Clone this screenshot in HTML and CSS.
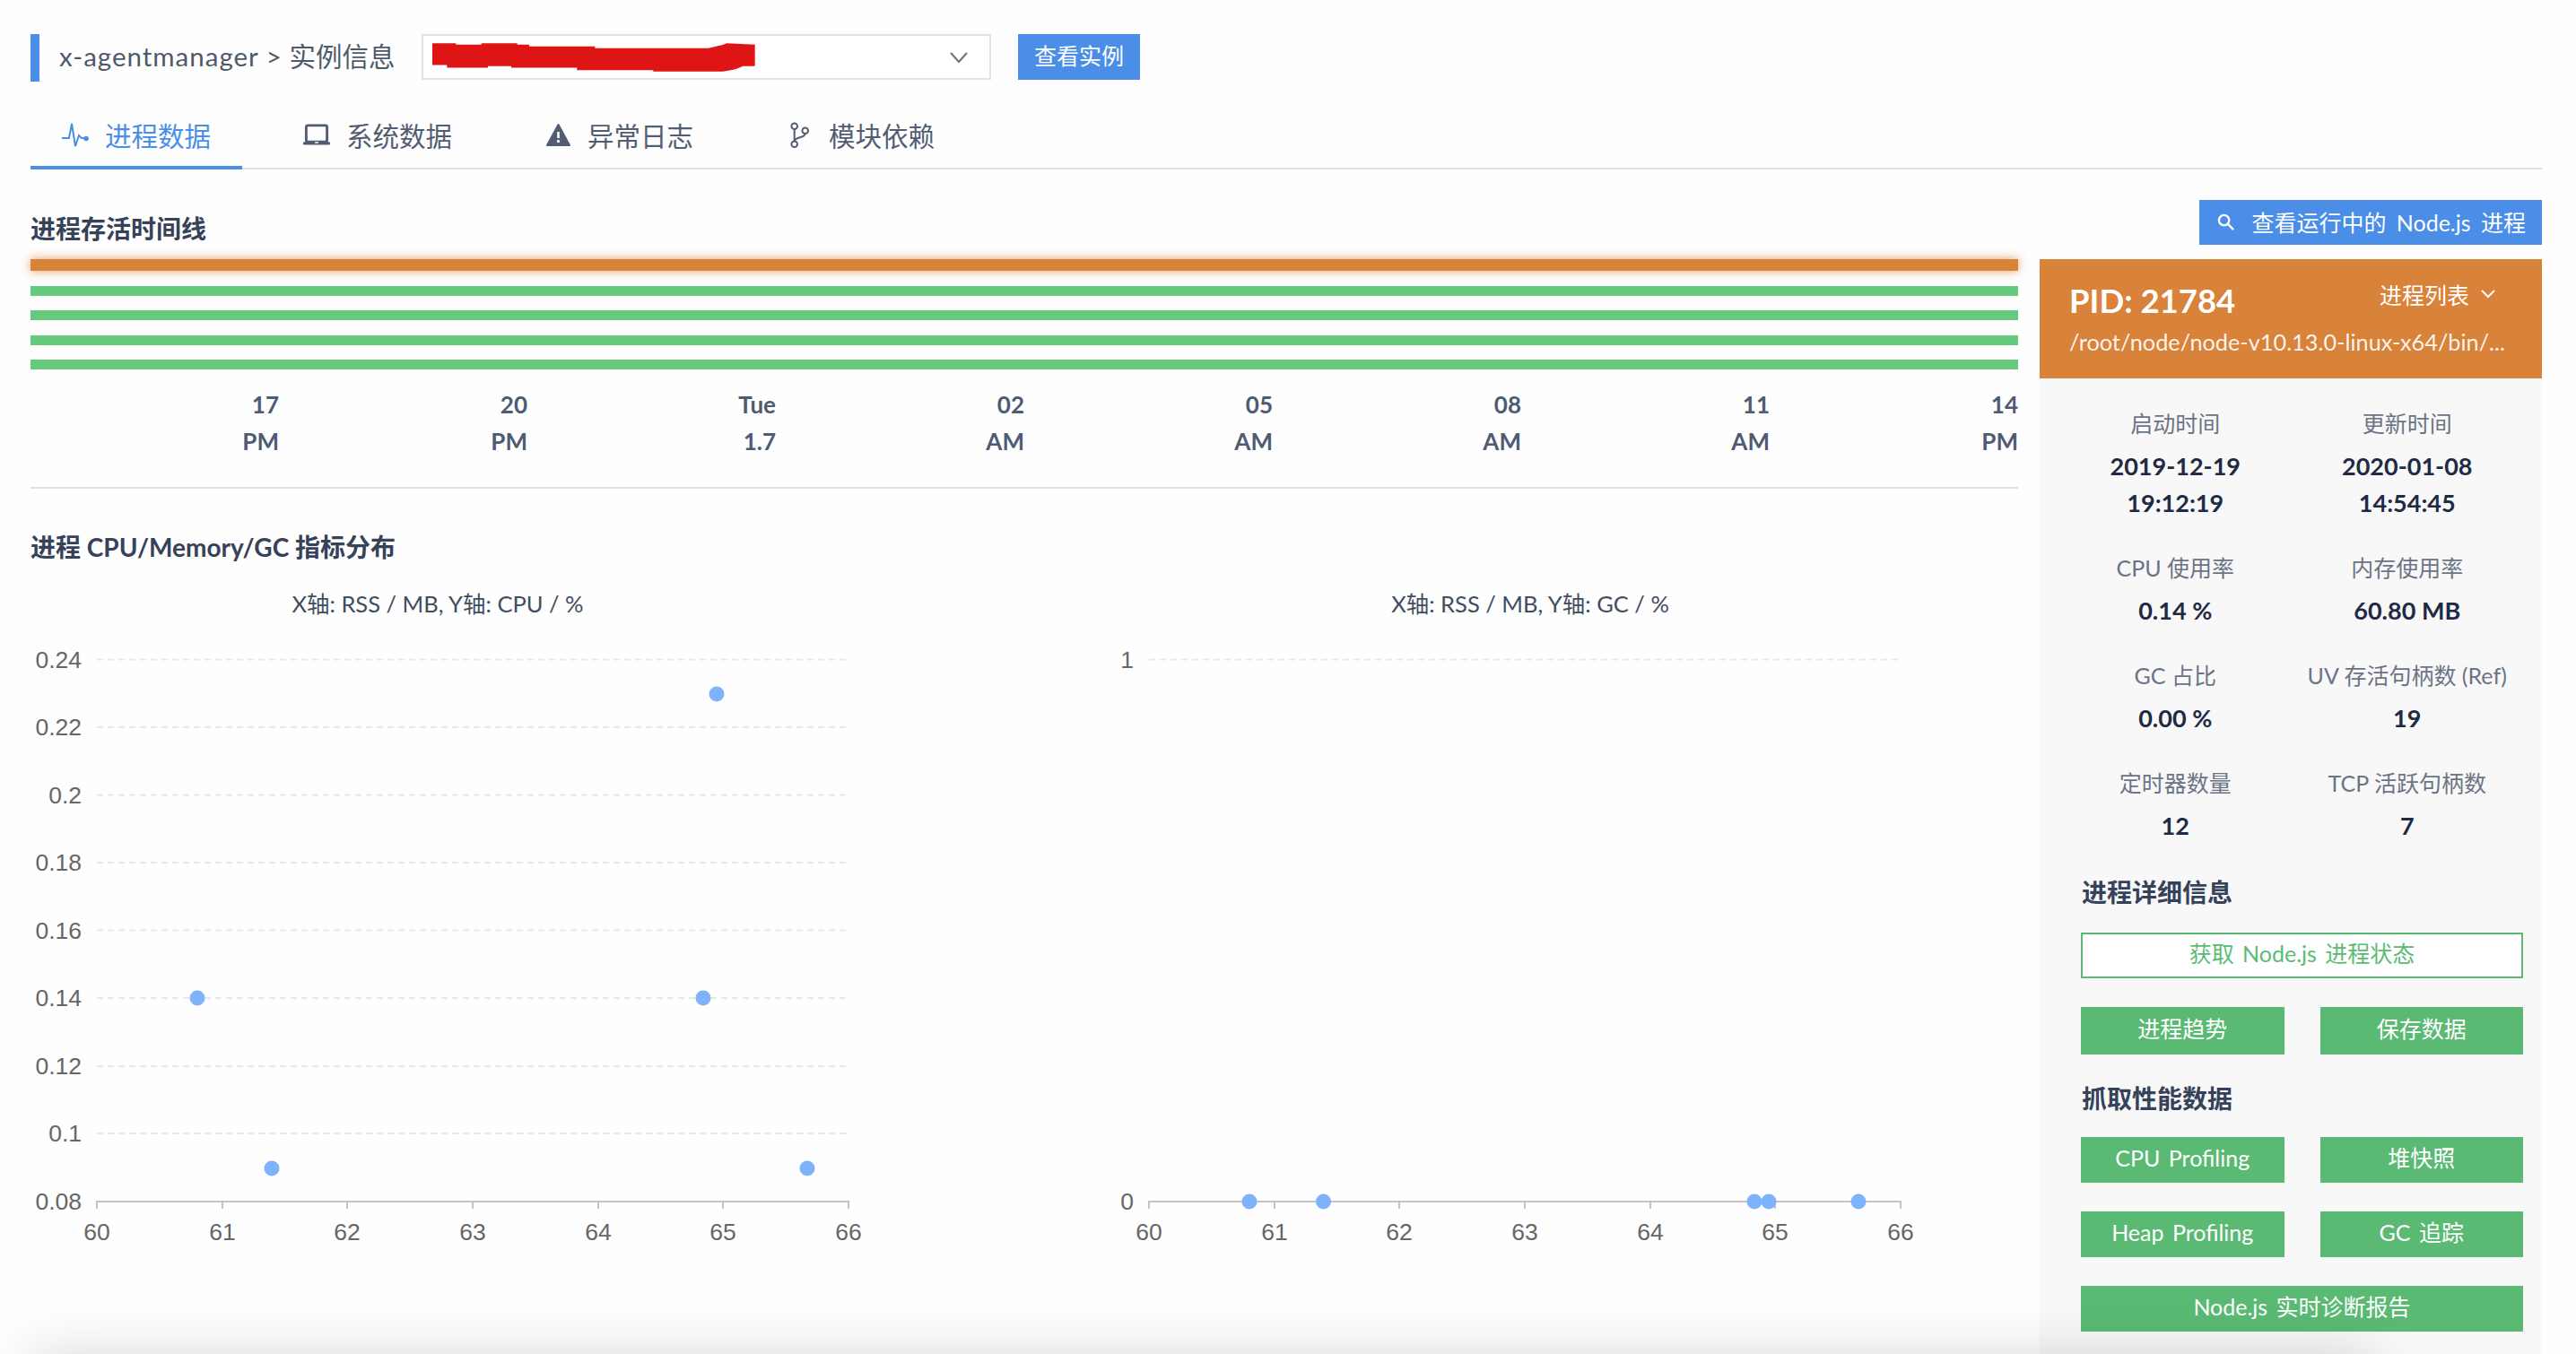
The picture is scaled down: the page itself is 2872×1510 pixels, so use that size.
FILE: index.html
```html
<!DOCTYPE html>
<html lang="zh">
<head>
    <meta charset="UTF-8">
    <title>实例信息</title>
    <link rel="stylesheet" href="styles.css">
</head>
<body>
<div class="page">
    <div class="top-bar">
        <div class="crumb"><span class="crumb-app">x-agentmanager &gt;</span> 实例信息</div>
        <div class="select">
            <svg class="redact" viewBox="36 55 1080 95"><polygon points="36,55 115,55 115,60 200,60 200,55 320,55 320,60 360,60 360,66 580,66 580,72 960,72 1010,60 1020,55 1115,60 1115,132 1075,132 1050,142 1008,150 775,150 775,145 520,145 520,137 300,137 300,132 222,132 222,137 85,137 85,128 36,128"/></svg>
            <svg class="select-arrow" viewBox="0 0 20 12"><polyline points="1,1 10,11 19,1"/></svg>
        </div>
        <div class="btn-blue btn-view">查看实例</div>
    </div>

    <ul class="tabs">
        <li class="tab active">
            <svg class="tab-icon" viewBox="0 0 30 30"><polyline class="line" points="0,19 8,19 11,3 15,28 19,16 22,19 25,19"/><circle class="solid" cx="27" cy="19.5" r="2.8"/></svg>
            进程数据
        </li>
        <li class="tab">
            <svg class="tab-icon" viewBox="0 0 31 30"><rect class="line" x="3.5" y="4.5" width="24" height="19" rx="2"/><rect class="solid" x="0" y="23.5" width="31" height="3.5" rx="1.5"/><rect x="13.5" y="23.5" width="4" height="1.5" fill="#fff"/></svg>
            系统数据
        </li>
        <li class="tab">
            <svg class="tab-icon" viewBox="0 0 30 30"><polygon class="solid warn" points="15.5,4 3,27 28,27"/><rect x="14.2" y="12" width="2.6" height="7" fill="#fff"/><rect x="14.2" y="21" width="2.6" height="3" fill="#fff"/></svg>
            异常日志
        </li>
        <li class="tab">
            <svg class="tab-icon" viewBox="0 0 30 30"><circle class="line thin" cx="9.7" cy="5.7" r="3.3"/><circle class="line thin" cx="21.7" cy="10.7" r="3.3"/><circle class="line thin" cx="9.7" cy="25.7" r="3.3"/><path class="line thin" d="M9.7 9V22.4M21.7 14C21.7 19 10.5 17.5 9.7 22.4"/></svg>
            模块依赖
        </li>
    </ul>

    <div class="section-head">
        <h2 class="title">进程存活时间线</h2>
        <div class="btn-blue btn-search">
            <svg class="search-icon" viewBox="0 0 20 20"><circle cx="8" cy="8" r="6"/><line x1="12.5" y1="12.5" x2="19" y2="19"/></svg>
            查看运行中的 Node.js 进程
        </div>
    </div>

    <div class="content">
        <div class="left">
            <div class="timeline">
                <div class="bar bar-current"></div>
                <div class="bar"></div>
                <div class="bar"></div>
                <div class="bar"></div>
                <div class="bar"></div>
            </div>
            <div class="axis">
                <div>17<br>PM</div>
                <div>20<br>PM</div>
                <div>Tue<br>1.7</div>
                <div>02<br>AM</div>
                <div>05<br>AM</div>
                <div>08<br>AM</div>
                <div>11<br>AM</div>
                <div>14<br>PM</div>
            </div>
            <h2 class="title title-chart">进程 CPU/Memory/GC 指标分布</h2>
            <div class="charts">
                <svg class="chart" viewBox="0 0 1108 780">
                    <text class="chart-title" x="454" y="43">X轴: RSS / MB, Y轴: CPU / %</text>
                    <g class="grid">
                        <line x1="74" x2="912" y1="95.6" y2="95.6"/>
                        <line x1="74" x2="912" y1="171" y2="171"/>
                        <line x1="74" x2="912" y1="246.6" y2="246.6"/>
                        <line x1="74" x2="912" y1="322" y2="322"/>
                        <line x1="74" x2="912" y1="397.6" y2="397.6"/>
                        <line x1="74" x2="912" y1="473" y2="473"/>
                        <line x1="74" x2="912" y1="549" y2="549"/>
                        <line x1="74" x2="912" y1="624" y2="624"/>
                    </g>
                    <g class="tick y-tick">
                        <text x="57" y="105">0.24</text>
                        <text x="57" y="180">0.22</text>
                        <text x="57" y="256">0.2</text>
                        <text x="57" y="331">0.18</text>
                        <text x="57" y="407">0.16</text>
                        <text x="57" y="482">0.14</text>
                        <text x="57" y="558">0.12</text>
                        <text x="57" y="633">0.1</text>
                        <text x="57" y="709">0.08</text>
                    </g>
                    <path class="x-axis" d="M74 708V700H912V708M214 700V708M353 700V708M493 700V708M633 700V708M772 700V708"/>
                    <g class="tick x-tick">
                        <text x="74" y="743">60</text>
                        <text x="214" y="743">61</text>
                        <text x="353" y="743">62</text>
                        <text x="493" y="743">63</text>
                        <text x="633" y="743">64</text>
                        <text x="772" y="743">65</text>
                        <text x="912" y="743">66</text>
                    </g>
                    <g class="dots">
                        <circle cx="186" cy="473" r="8.5"/>
                        <circle cx="750" cy="473" r="8.5"/>
                        <circle cx="269" cy="663" r="8.5"/>
                        <circle cx="866" cy="663" r="8.5"/>
                        <circle cx="765" cy="134" r="8.5"/>
                    </g>
                </svg>
                <svg class="chart" viewBox="0 0 1108 780">
                    <text class="chart-title" x="564" y="43">X轴: RSS / MB, Y轴: GC / %</text>
                    <g class="grid">
                        <line x1="139" x2="977" y1="95.6" y2="95.6"/>
                    </g>
                    <g class="tick y-tick">
                        <text x="122" y="105">1</text>
                        <text x="122" y="709">0</text>
                    </g>
                    <path class="x-axis" d="M139 708V700H977V708M279 700V708M418 700V708M558 700V708M698 700V708M837 700V708"/>
                    <g class="tick x-tick">
                        <text x="139" y="743">60</text>
                        <text x="279" y="743">61</text>
                        <text x="418" y="743">62</text>
                        <text x="558" y="743">63</text>
                        <text x="698" y="743">64</text>
                        <text x="837" y="743">65</text>
                        <text x="977" y="743">66</text>
                    </g>
                    <g class="dots">
                        <circle cx="251" cy="700" r="8.5"/>
                        <circle cx="333.5" cy="700" r="8.5"/>
                        <circle cx="814" cy="700" r="8.5"/>
                        <circle cx="830" cy="700" r="8.5"/>
                        <circle cx="930" cy="700" r="8.5"/>
                    </g>
                </svg>
            </div>
        </div>

        <div class="side">
            <div class="side-head">
                <div class="side-head-top">
                    <span class="pid">PID: 21784</span>
                    <span class="proc-list">进程列表
                        <svg class="proc-arrow" viewBox="0 0 16 10"><polyline points="1,1 8,8 15,1"/></svg>
                    </span>
                </div>
                <div class="path">/root/node/node-v10.13.0-linux-x64/bin/...</div>
            </div>
            <div class="stats">
                <div class="stat"><div class="stat-label">启动时间</div><div class="stat-value">2019-12-19<br>19:12:19</div></div>
                <div class="stat"><div class="stat-label">更新时间</div><div class="stat-value">2020-01-08<br>14:54:45</div></div>
                <div class="stat"><div class="stat-label">CPU 使用率</div><div class="stat-value">0.14 %</div></div>
                <div class="stat"><div class="stat-label">内存使用率</div><div class="stat-value">60.80 MB</div></div>
                <div class="stat"><div class="stat-label">GC 占比</div><div class="stat-value">0.00 %</div></div>
                <div class="stat"><div class="stat-label">UV 存活句柄数 (Ref)</div><div class="stat-value">19</div></div>
                <div class="stat"><div class="stat-label">定时器数量</div><div class="stat-value">12</div></div>
                <div class="stat"><div class="stat-label">TCP 活跃句柄数</div><div class="stat-value">7</div></div>
            </div>
            <div class="actions">
                <h3 class="side-title">进程详细信息</h3>
                <div class="btn-grid btn-grid-first">
                    <div class="btn btn-outline wide">获取 Node.js 进程状态</div>
                    <div class="btn btn-tall">进程趋势</div>
                    <div class="btn btn-tall">保存数据</div>
                </div>
                <h3 class="side-title side-title-2">抓取性能数据</h3>
                <div class="btn-grid">
                    <div class="btn">CPU Profiling</div>
                    <div class="btn">堆快照</div>
                    <div class="btn">Heap Profiling</div>
                    <div class="btn">GC 追踪</div>
                    <div class="btn wide">Node.js 实时诊断报告</div>
                </div>
            </div>
        </div>
    </div>
</div>
<div class="window-shadow"></div>
</body>
</html>
```

FILE: styles.css
```css
* {
    margin: 0;
    padding: 0;
    box-sizing: border-box;
}

ul {
    list-style: none;
}

html, body {
    height: 1510px;
    overflow: hidden;
}

body {
    position: relative;
    background: #fefefe;
    color: #4e5a6b;
    font-family: Lato, "Noto Sans CJK SC", sans-serif;
}

.page {
    height: 1510px;
    padding: 38px 38px 0 34px;
    overflow: hidden;
}

/* top bar */
.top-bar {
    display: flex;
    align-items: flex-start;
}

.crumb {
    width: 404px;
    height: 53px;
    padding-left: 22px;
    border-left: 10px solid #4a8ee8;
    font-size: 29.5px;
    line-height: 50px;
    white-space: nowrap;
}

.crumb-app {
    letter-spacing: 1px;
}

.select {
    display: flex;
    align-items: center;
    justify-content: space-between;
    width: 635px;
    height: 51px;
    margin-left: 32px;
    padding: 0 24px 0 10px;
    border: 2px solid #e1e2e8;
    background: #fff;
}

.redact {
    width: 360px;
    height: 32px;
    fill: #df1515;
}

.select-arrow {
    width: 20px;
    height: 12px;
    fill: none;
    stroke: #68727f;
    stroke-width: 2;
}

.btn-blue {
    background: #4a8ee8;
    color: #fff;
    font-size: 25px;
}

.btn-view {
    width: 136px;
    height: 51px;
    margin-left: 30px;
    line-height: 49px;
    text-align: center;
}

/* tabs */
.tabs {
    display: flex;
    align-items: flex-end;
    gap: 33px;
    height: 98px;
    border-bottom: 2px solid #dfe0e8;
}

.tab {
    display: flex;
    align-items: center;
    height: 72px;
    margin-bottom: -2px;
    padding: 0 35px 2px;
    border-bottom: 4px solid transparent;
    font-size: 29.5px;
    color: #525d72;
}

.tab.active {
    color: #4a8ee8;
    border-bottom-color: #4a8ee8;
}

.tab-icon {
    flex: none;
    width: 30px;
    height: 30px;
    margin-right: 18px;
}

.tab-icon .line {
    fill: none;
    stroke: currentColor;
    stroke-width: 3;
}

.tab-icon .thin {
    stroke-width: 2;
}

.tab.active .line {
    stroke-width: 2;
}

.tab-icon .solid {
    fill: currentColor;
}

.tab-icon .warn {
    stroke: currentColor;
    stroke-width: 2;
    stroke-linejoin: round;
}

/* section head */
.section-head {
    display: flex;
    justify-content: space-between;
    height: 50px;
    margin-top: 34px;
}

.title {
    font-size: 28px;
    font-weight: 700;
    line-height: 40px;
    color: #36415a;
}

.section-head .title {
    margin-top: 12px;
}

.btn-search {
    display: flex;
    align-items: center;
    justify-content: flex-end;
    width: 382px;
    height: 50px;
    padding: 0 18px 2px 0;
    white-space: nowrap;
    word-spacing: 5px;
}

.search-icon {
    width: 19px;
    height: 19px;
    margin-right: 19px;
    fill: none;
    stroke: #fff;
    stroke-width: 2.5;
}

.content {
    display: grid;
    grid-template-columns: 2216px 560px;
    column-gap: 24px;
    margin-top: 16px;
}

/* timeline */
.timeline {
    display: flex;
    flex-direction: column;
    gap: 16.5px;
}

.bar {
    height: 11px;
    background: #66ca7d;
}

.bar-current {
    height: 13px;
    background: #d9823a;
    box-shadow: 0 0 12px rgba(217, 130, 58, 0.8);
}

.axis {
    display: grid;
    grid-template-columns: repeat(8, 1fr);
    margin-top: 19px;
    padding-bottom: 30px;
    border-bottom: 2px solid #dfe0e8;
    font-size: 26px;
    font-weight: 700;
    line-height: 41px;
    text-align: right;
    color: #4f5a73;
}

.title-chart {
    margin-top: 45px;
}

.charts {
    display: grid;
    grid-template-columns: 1108px 1108px;
    margin-top: 10px;
}

.chart {
    display: block;
    width: 1108px;
    height: 780px;
}

.chart-title {
    font-size: 25.5px;
    text-anchor: middle;
    fill: #414d60;
}

.grid line {
    stroke: #e8e8e8;
    stroke-width: 2;
    stroke-dasharray: 7 5;
}

.tick {
    font-family: "Liberation Sans", sans-serif;
    font-size: 26.5px;
    fill: #666;
}

.y-tick {
    text-anchor: end;
}

.x-tick {
    text-anchor: middle;
}

.x-axis {
    fill: none;
    stroke: #c4c4c4;
    stroke-width: 2;
}

.dots {
    fill: #7eb2fa;
}

/* side panel */
.side {
    height: 1221px;
    background: #f8f8f9;
}

.side-head {
    height: 133px;
    padding: 21px 40px 0 33px;
    background: #d9823a;
    color: #fff;
}

.side-head-top {
    display: flex;
    justify-content: space-between;
    height: 50px;
}

.pid {
    font-size: 36.5px;
    font-weight: 700;
    line-height: 50px;
}

.proc-list {
    display: flex;
    align-items: center;
    height: 36px;
    margin-right: 12px;
    font-size: 25px;
}

.proc-arrow {
    width: 16px;
    height: 10px;
    margin-left: 13px;
    fill: none;
    stroke: #fff;
    stroke-width: 2;
}

.path {
    margin-top: 3px;
    font-size: 25.3px;
    line-height: 36px;
    white-space: nowrap;
    color: rgba(255, 255, 255, 0.92);
}

.stats {
    display: grid;
    grid-template-columns: 258.5px 258.5px;
    row-gap: 32px;
    padding: 30px 21px 0 22px;
    text-align: center;
}

.stat-label {
    font-size: 25px;
    line-height: 40px;
    color: #6b7484;
    white-space: nowrap;
}

.stat-value {
    margin-top: 7px;
    font-size: 27px;
    font-weight: 700;
    line-height: 41px;
    color: #1f2a44;
}

.actions {
    padding: 34px 21px 0 46px;
}

.side-title {
    padding-left: 1px;
    font-size: 28px;
    font-weight: 700;
    line-height: 40px;
    color: #36415a;
}

.side-title-2 {
    margin-top: 29px;
}

.btn-grid {
    display: grid;
    grid-template-columns: 226.5px 226.5px;
    gap: 32px 40px;
    margin-top: 23px;
}

.btn-grid-first {
    margin-top: 25px;
}

.btn {
    height: 51px;
    line-height: 47px;
    background: #5aba74;
    color: #fff;
    font-size: 25px;
    text-align: center;
    word-spacing: 3px;
}

.btn-tall {
    height: 53px;
    line-height: 49px;
}

.btn.wide {
    grid-column: span 2;
}

.btn-outline {
    border: 2px solid #5bbb75;
    background: #fff;
    color: #5bbb75;
    line-height: 42px;
}

/* soft shadow along the bottom edge of the capture */
.window-shadow {
    position: absolute;
    left: 0;
    right: 0;
    bottom: 0;
    height: 90px;
    overflow: hidden;
    pointer-events: none;
}

.window-shadow::after {
    content: "";
    position: absolute;
    left: 60px;
    top: 115px;
    width: 2560px;
    height: 60px;
    box-shadow: 0 0 60px 25px rgba(0, 0, 0, 0.15);
}
```
